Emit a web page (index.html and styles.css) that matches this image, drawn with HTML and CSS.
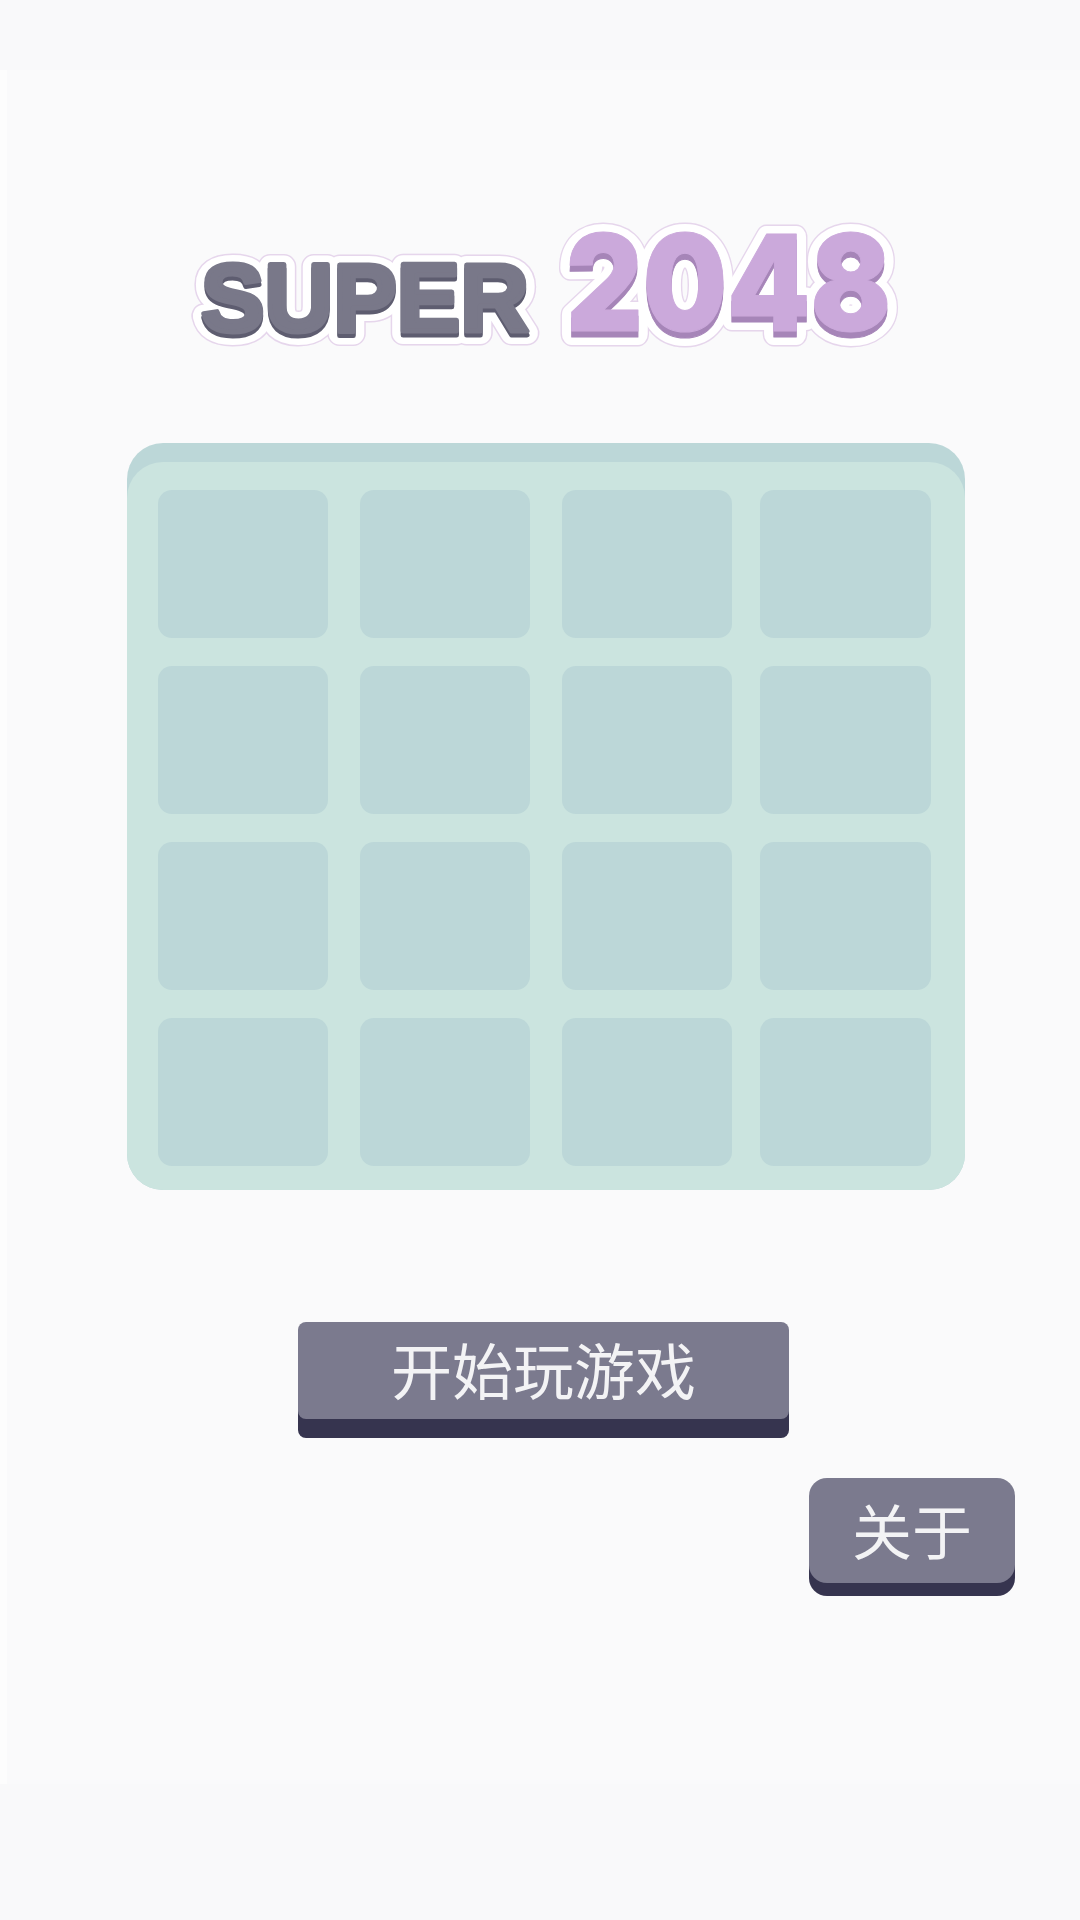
FILE: index.html
```html
<!DOCTYPE html>
<html lang="zh-CN">
<head>
    <meta charset="UTF-8">
    <meta name="viewport" content="width=device-width, initial-scale=1.0">
    <title>Super 2048</title>
    <link rel="stylesheet" href="styles.css">
</head>
<body>
    <div class="screen">
        <!-- logo: each word is one text element, reused for the outline layers -->
        <svg class="logo" viewBox="170 220 760 140" width="760" height="140">
            <defs>
                <text id="wordSuper" class="word-super" x="201" y="331" textLength="328" lengthAdjust="spacingAndGlyphs">SUPER</text>
                <text id="wordNum" class="word-num" x="566" y="331" textLength="325" lengthAdjust="spacingAndGlyphs">2048</text>
            </defs>
            <use href="#wordSuper" class="edge-outer" y="2"></use>
            <use href="#wordNum" class="edge-outer" y="3"></use>
            <use href="#wordSuper" class="edge-inner" y="2"></use>
            <use href="#wordNum" class="edge-inner" y="3"></use>
            <use href="#wordSuper" class="shade-super" y="4"></use>
            <use href="#wordNum" class="shade-num" y="6"></use>
            <use href="#wordSuper" class="face-super"></use>
            <use href="#wordNum" class="face-num"></use>
        </svg>

        <div class="board">
            <div class="board-face">
                <div class="cell"></div><div class="cell"></div><div class="cell"></div><div class="cell"></div>
                <div class="cell"></div><div class="cell"></div><div class="cell"></div><div class="cell"></div>
                <div class="cell"></div><div class="cell"></div><div class="cell"></div><div class="cell"></div>
                <div class="cell"></div><div class="cell"></div><div class="cell"></div><div class="cell"></div>
            </div>
        </div>

        <button class="btn btn-start">开始玩游戏</button>
        <button class="btn btn-about">关于</button>
    </div>
</body>
</html>
```

FILE: styles.css
```css
html, body {
    margin: 0;
    height: 100%;
}
body {
    background: #f9f9fa;
    font-family: "Noto Sans CJK SC", sans-serif;
}
.screen {
    display: flex;
    flex-direction: column;
    align-items: flex-start;
    box-sizing: border-box;
    height: 1714px;
    margin-top: 70px;
    padding-left: 7px;
    background: linear-gradient(to right, #fdfdfd 7px, #fafafb 7px);
}

/* logo */
.logo {
    display: block;
    margin: 150px 0 0 163px;
}
.word-super {
    font-family: "Liberation Sans", sans-serif;
    font-weight: 700;
    font-size: 96px;
}
.word-num {
    font-family: Inter, sans-serif;
    font-weight: 900;
    font-size: 134px;
}
.edge-outer, .edge-inner, .face-super, .face-num, .shade-super, .shade-num {
    stroke-linejoin: round;
    stroke-linecap: round;
}
.edge-outer { fill: #e6d6ec; stroke: #e6d6ec; stroke-width: 25px; }
.edge-inner { fill: #fff; stroke: #fff; stroke-width: 22px; }
.shade-super { fill: #5e5d70; stroke: #5e5d70; stroke-width: 5px; }
.shade-num { fill: #a685b8; stroke: #a685b8; stroke-width: 1px; }
.face-super { fill: #797889; stroke: #797889; stroke-width: 5px; }
.face-num { fill: #cba9db; stroke: #cba9db; stroke-width: 1px; }

/* board */
.board {
    width: 838px;
    margin: 83px 0 0 120px;
    padding-top: 19px;
    background: #bcd7d8;
    border-radius: 36px;
}
.board-face {
    display: grid;
    grid-template-columns: 202px 202px 198px 171px;
    grid-auto-rows: 148px;
    row-gap: 28px;
    padding: 28px 34px 24px 31px;
    background: #cbe4df;
    border-radius: 36px;
}
.cell {
    background: #bcd7d8;
    border-radius: 14px;
}
.cell:not(:nth-child(4n)) { width: 170px; }

/* buttons */
.btn {
    border: 0;
    padding: 0 0 4px;
    background: #7b7a8e;
    color: #f3f3f5;
    font-family: inherit;
    font-weight: 400;
    line-height: 1;
    cursor: pointer;
}
.btn-start {
    width: 491px;
    height: 97px;
    margin: 132px 0 0 291px;
    border-radius: 8px;
    box-shadow: 0 19px 0 #36344f;
    font-size: 61px;
}
.btn-about {
    width: 206px;
    height: 105px;
    margin: 59px 0 0 802px;
    border-radius: 18px;
    box-shadow: 0 13px 0 #36344f;
    font-size: 60px;
}
```
